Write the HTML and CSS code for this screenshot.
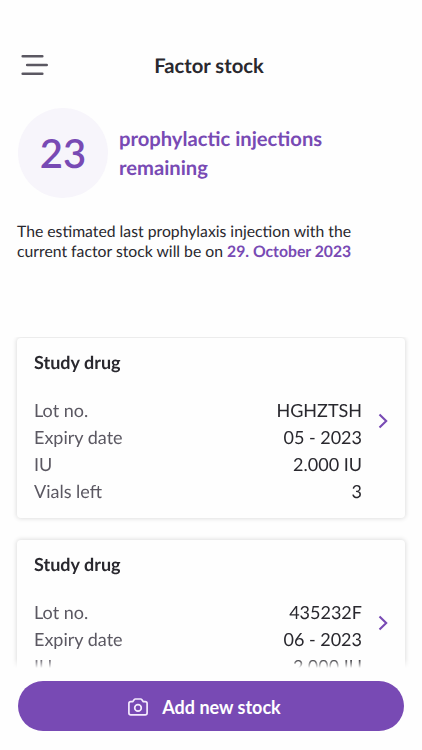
FILE: index.html
```html
<!DOCTYPE html>
<html lang="en">
<head>
<meta charset="utf-8">
<meta name="viewport" content="width=device-width, initial-scale=1">
<title>Factor stock</title>
<link rel="stylesheet" href="styles.css">
</head>
<body>
<div class="app">
  <header class="header">
    <svg class="menu" width="28" height="22" viewBox="0 0 28 22" fill="none" stroke="#5b5862" stroke-width="2.6" stroke-linecap="round"><path d="M2.7 2.3H22.3M7.2 11H26.7M2.7 19.7H22.3"/></svg>
    <h1 class="title">Factor stock</h1>
  </header>
  <section class="summary">
    <div class="count">23</div>
    <p class="summary-text">prophylactic injections<br>remaining</p>
  </section>
  <p class="estimate">The estimated last prophylaxis injection with the<br>current factor stock will be on <strong>29. October 2023</strong></p>
  <main class="list">
    <article class="card">
      <h2 class="card-title">Study drug</h2>
      <div class="card-body">
        <dl class="details">
          <dt>Lot no.</dt><dd>HGHZTSH</dd>
          <dt>Expiry date</dt><dd>05 - 2023</dd>
          <dt>IU</dt><dd>2.000 IU</dd>
          <dt>Vials left</dt><dd>3</dd>
        </dl>
        <svg class="chevron" width="10" height="16" viewBox="0 0 10 16" fill="none" stroke="#784ab4" stroke-width="2.1"><path d="M1.5 1.4L8.2 8L1.5 14.6"/></svg>
      </div>
    </article>
    <article class="card">
      <h2 class="card-title">Study drug</h2>
      <div class="card-body">
        <dl class="details">
          <dt>Lot no.</dt><dd>435232F</dd>
          <dt>Expiry date</dt><dd>06 - 2023</dd>
          <dt>IU</dt><dd>2.000 IU</dd>
        </dl>
        <svg class="chevron" width="10" height="16" viewBox="0 0 10 16" fill="none" stroke="#784ab4" stroke-width="2.1"><path d="M1.5 1.4L8.2 8L1.5 14.6"/></svg>
      </div>
    </article>
  </main>
  <footer class="footer">
    <button class="add" type="button">
      <svg class="camera" width="20" height="18" viewBox="0 0 20 18" fill="none" stroke="#f4eafd" stroke-width="1.7" stroke-linejoin="round"><path d="M2.8 3.7H4.7L6.3 1.5Q6.7 1 7.3 1H12.7Q13.3 1 13.7 1.5L15.3 3.7H17.2Q19.1 3.7 19.1 5.6V14.9Q19.1 16.8 17.2 16.8H2.8Q.9 16.8.9 14.9V5.6Q.9 3.7 2.8 3.7Z"/><circle cx="10" cy="9.9" r="3.3"/></svg>
      <span>Add new stock</span>
    </button>
  </footer>
</div>
</body>
</html>
```
FILE: styles.css
```css
* { box-sizing: border-box; }
body {
  margin: 0;
  background: #fefefe;
  color: #29282e;
  font-family: Lato, "Open Sans", sans-serif;
  text-rendering: geometricPrecision;
}
h1, h2, p, dl, dd { margin: 0; }
.app {
  height: 750px;
  display: flex;
  flex-direction: column;
  overflow: hidden;
}
.header {
  height: 108px;
  padding: 50px 20px 0;
  display: grid;
  grid-template-columns: 28px 1fr 32px;
  align-items: start;
}
.menu { margin-top: 4px; }
.title {
  padding-top: 1px;
  font-size: 20.2px;
  line-height: 30px;
  font-weight: 700;
  text-align: center;
}
.summary {
  display: flex;
  align-items: center;
  gap: 11px;
  padding-left: 18px;
  height: 90px;
}
.count {
  width: 90px;
  height: 90px;
  border-radius: 50%;
  background: #f7f5fb;
  color: #784ab4;
  font-size: 40px;
  line-height: 90px;
  font-weight: 600;
  text-align: center;
}
.summary-text {
  padding-top: 1px;
  color: #784ab4;
  font-size: 20.2px;
  line-height: 29px;
  font-weight: 700;
}
.estimate {
  height: 139px;
  padding: 24px 0 0 17px;
  font-size: 15.75px;
  line-height: 20px;
  white-space: nowrap;
}
.estimate strong { color: #784ab4; }
.list {
  height: 333px;
  padding: 1px 17px 0;
  display: flex;
  flex-direction: column;
  gap: 22px;
  overflow: hidden;
  -webkit-mask-image: linear-gradient(#000 322px, transparent 331px);
  mask-image: linear-gradient(#000 322px, transparent 331px);
}
.card {
  flex: none;
  height: 180px;
  padding: 11px 17px 0;
  border-radius: 4px;
  background: #fefefe;
  box-shadow: 0 0 4px 1px rgba(0, 0, 0, .12);
}
.card-title {
  font-size: 18px;
  line-height: 27px;
  font-weight: 700;
}
.card-body {
  margin-top: 21px;
  display: flex;
  gap: 16px;
}
.details {
  flex: 1;
  display: grid;
  grid-template-columns: 1fr auto;
  grid-auto-rows: 27px;
  font-size: 18px;
  line-height: 27px;
}
.details dt { color: #5b5862; }
.details dd { text-align: right; }
.chevron { margin-top: 16px; }
.footer { padding: 11px 18px 0; }
.add {
  width: 100%;
  height: 50px;
  border: 0;
  border-radius: 25px;
  background: #784ab4;
  color: #fff;
  display: flex;
  align-items: center;
  justify-content: center;
  gap: 14px;
  padding: 2px 13px 0 0;
  font: 700 18px/27px Lato, "Open Sans", sans-serif;
}
```
